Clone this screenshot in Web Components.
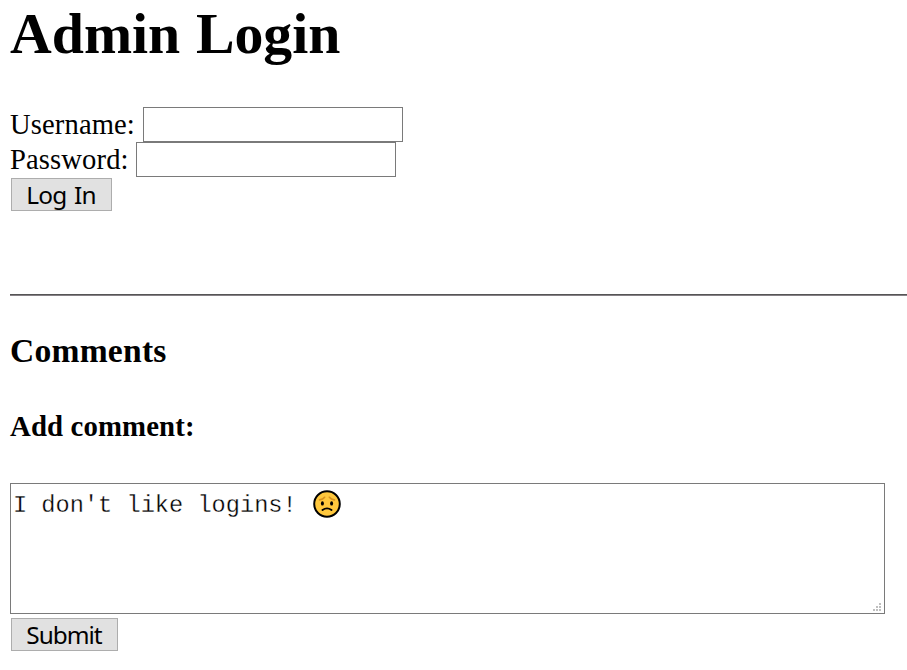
<!DOCTYPE html>
<html lang="en"><head><meta charset="utf-8"><title>Admin Login</title>
<style>
html{overflow:hidden;background:#fff}
body{margin:0;color:#000;font:28.6px/35px "Liberation Serif",serif}
</style></head><body>
<login-page></login-page>
<script>
const define=(name,html,setup)=>customElements.define(name,class extends HTMLElement{
  connectedCallback(){
    if(this.shadowRoot)return;
    this.attachShadow({mode:'open'}).innerHTML=html;
    if(setup)setup(this,this.shadowRoot);
  }
});

define('page-heading',`<style>
:host{display:block}
h1,h3,h4{margin:0;font-weight:bold;white-space:nowrap}
h1{font-size:57.8px;line-height:66px;word-spacing:1.2px}
h3{font-size:33.6px;line-height:40px;letter-spacing:.22px}
h4{font-size:28.8px;line-height:34px;letter-spacing:.12px}
</style><slot></slot>`,(host,root)=>{
  const h=document.createElement('h'+host.getAttribute('level'));
  h.append(root.querySelector('slot'));
  root.append(h);
});

define('text-field',`<style>
:host{display:flex;height:35px}
label{white-space:nowrap;margin-right:7.7px;letter-spacing:.12px}
input{box-sizing:border-box;width:260px;height:35px;margin:0;padding:2px 4px;border:1px solid #7a7a7a;border-radius:0;background:#fff;font:24px "Noto Sans",sans-serif;outline:0}
</style><label for="f"><slot></slot></label><input id="f">`,(host,root)=>{
  root.querySelector('input').type=host.getAttribute('type')||'text';
});

define('push-button',`<style>
:host{display:block;margin-left:1px}
button{display:block;box-sizing:border-box;width:var(--button-width);height:33px;padding:1px 1px 0 0;margin:0;border:1px solid #adadad;border-radius:0;background:#e1e1e1;color:#000;font:24.4px/30px "Noto Sans",sans-serif;letter-spacing:var(--button-spacing);word-spacing:2px}
</style><button type="button"><slot></slot></button>`);

define('worried-face',`<style>
:host{display:inline-block;width:28px;height:28px;margin-left:2px;vertical-align:-6px}
svg{display:block}
</style><svg width="28" height="28" viewBox="0 0 28 28" fill="none" stroke-linecap="round">
<circle cx="14" cy="14" r="12.8" fill="#ffc83d" stroke="#000" stroke-width="2"/>
<path d="M6.6 9.8Q10 9.4 11.6 7.3M16.4 7.3Q18 9.4 21.4 9.8" stroke="#d9921f" stroke-width="1.7"/>
<ellipse cx="9.4" cy="13.4" rx="1.5" ry="2.2" fill="#000"/><ellipse cx="18.6" cy="13.4" rx="1.5" ry="2.2" fill="#000"/>
<path d="M9.5 20Q14 16.8 18.5 20" stroke="#000" stroke-width="1.9"/>
</svg>`);

define('comment-box',`<style>
:host{display:flex;box-sizing:border-box;width:875px;height:131px;border:1px solid #7a7a7a;background:#fff;padding:6px 2px 2px;justify-content:space-between}
div{font:23.65px/28px "Liberation Mono",monospace;white-space:pre;-webkit-text-stroke:.3px #fff}
svg{align-self:flex-end;flex:none}
</style><div role="textbox" aria-multiline="true"><slot></slot></div>
<svg width="9" height="8" viewBox="0 0 9 8" fill="#bfbfbf" shape-rendering="crispEdges"><path d="M6 0h2v2H6zM3 3h2v2H3zM6 3h2v2H6zM0 6h2v2H0zM3 6h2v2H3zM6 6h2v2H6z"/></svg>`);

define('login-page',`<style>
:host{display:flex;flex-direction:column;align-items:flex-start;padding:0 0 0 10px}
.title{margin-top:1px}
form{display:flex;flex-direction:column;margin:40px 0 0}
.login{--button-width:101px;--button-spacing:-.8px;margin-top:1px}
hr{align-self:stretch;height:2px;margin:83px 0 0;border:0;background:linear-gradient(#555 50%,#858085 50%)}
.comments{margin-top:35px}
.add{margin-top:38px}
comment-box{margin-top:40px}
.submit{--button-width:107px;--button-spacing:-1px;margin-top:4px}
</style>
<page-heading class="title" level="1">Admin Login</page-heading>
<form><text-field>Username:</text-field><text-field type="password">Password:</text-field><push-button class="login">Log In</push-button></form>
<hr>
<page-heading class="comments" level="3">Comments</page-heading>
<page-heading class="add" level="4">Add comment:</page-heading>
<comment-box>I don't like logins! <worried-face></worried-face></comment-box>
<push-button class="submit">Submit</push-button>`);
</script></body></html>
